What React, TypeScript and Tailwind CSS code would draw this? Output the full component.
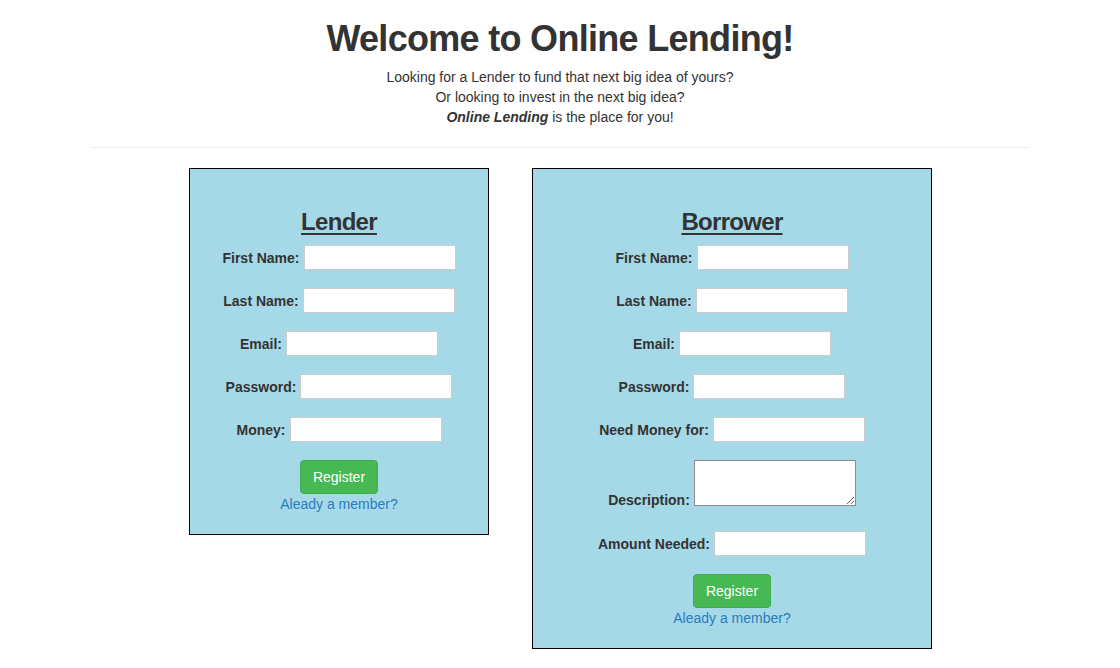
import React from "react";

interface Field {
  label: string;
  multiline?: boolean;
}

const lenderFields: Field[] = [
  { label: "First Name:" },
  { label: "Last Name:" },
  { label: "Email:" },
  { label: "Password:" },
  { label: "Money:" },
];

const borrowerFields: Field[] = [
  { label: "First Name:" },
  { label: "Last Name:" },
  { label: "Email:" },
  { label: "Password:" },
  { label: "Need Money for:" },
  { label: "Description:", multiline: true },
  { label: "Amount Needed:" },
];

function FormRow({ field }: { field: Field }) {
  if (field.multiline) {
    return (
      <div className="flex justify-center items-end gap-[4px] h-[46px] mb-[7px]">
        <label className="font-bold text-[14px] leading-[12px]">{field.label}</label>
        <textarea className="w-[162px] h-[46px] bg-white border border-[#8c8c8c] outline-none" />
      </div>
    );
  }
  return (
    <div className="flex justify-center items-center gap-[4px] h-[25px]">
      <label className="font-bold text-[14px] leading-[20px]">{field.label}</label>
      <input type="text" className="w-[152px] h-[25px] bg-white border border-[#cccccc] outline-none" />
    </div>
  );
}

function SignupCard({ title, fields, width }: { title: string; fields: Field[]; width: string }) {
  return (
    <div className={`${width} bg-[#a6d9e7] border border-black pt-[40px] pb-[20px] flex flex-col items-center`}>
      <h3 className="text-[24px] leading-[26px] h-[26px] font-bold tracking-[-0.7px] underline underline-offset-[3px]">
        {title}
      </h3>
      <div className="mt-[10px] flex flex-col gap-[18px] w-full">
        {fields.map((f) => (
          <FormRow key={f.label} field={f} />
        ))}
        <div className="flex flex-col items-center">
          <button className="h-[34px] px-[12px] rounded-[4px] bg-[#46b955] border border-[#3dae4b] text-white text-[14px]">
            Register
          </button>
          <a href="#" className="text-[14px] leading-[20px] text-[#2a7bbf]">
            Aleady a member?
          </a>
        </div>
      </div>
    </div>
  );
}

export default function App() {
  return (
    <div className="min-h-[668px] bg-white text-[#333333] font-['Liberation_Sans',Arial,sans-serif]">
      <div className="w-[940px] mx-auto">
        <div className="text-center">
          <h1 className="mt-[19px] text-[36px] leading-[40px] font-bold tracking-[-0.7px]">
            Welcome to Online Lending!
          </h1>
          <p className="mt-[8px] text-[14px] leading-[20px]">
            Looking for a Lender to fund that next big idea of yours?
            <br />
            Or looking to invest in the next big idea?
            <br />
            <b>
              <i>Online Lending</i>
            </b>{" "}
            is the place for you!
          </p>
        </div>
        <hr className="mt-[20px] border-t border-[#eeeeee]" />
        <div className="mt-[20px] ml-[99px] flex items-start gap-[43px]">
          <SignupCard title="Lender" fields={lenderFields} width="w-[300px]" />
          <SignupCard title="Borrower" fields={borrowerFields} width="w-[400px]" />
        </div>
      </div>
    </div>
  );
}
